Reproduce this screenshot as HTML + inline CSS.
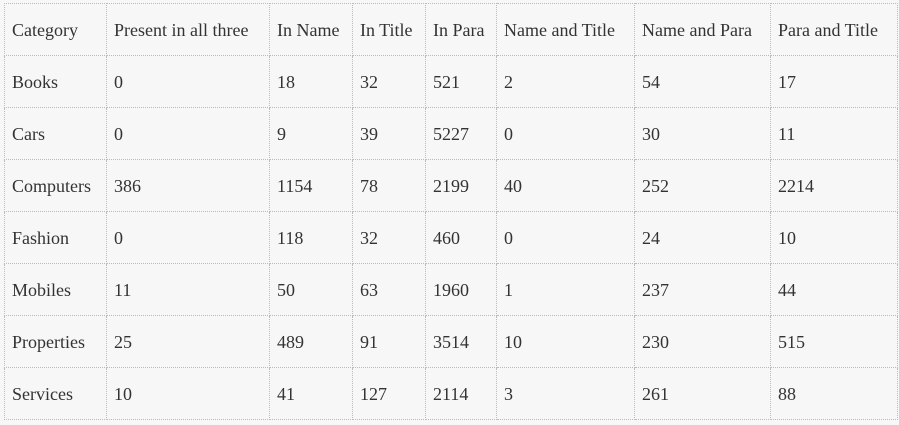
<!DOCTYPE html>
<html><head><style>
html,body{margin:0;padding:0;background:#f7f7f7;}
table{position:absolute;left:4px;top:3px;border-collapse:collapse;table-layout:fixed;width:893px;font-size:18px;color:#333;}
td{font-family:"Liberation Serif","Noto Serif CJK SC","DejaVu Serif",serif;border:1px dotted #bbb;height:52px;padding:2px 0 0 7px;box-sizing:border-box;white-space:nowrap;overflow:hidden;vertical-align:middle;}
</style></head><body>
<table>
<colgroup><col style="width:102px"><col style="width:163px"><col style="width:83px"><col style="width:73px"><col style="width:71px"><col style="width:138px"><col style="width:136px"><col style="width:127px"></colgroup>
<tr><td>Category</td><td>Present in all three</td><td>In Name</td><td>In Title</td><td>In Para</td><td>Name and Title</td><td>Name and Para</td><td>Para and Title</td></tr>
<tr><td>Books</td><td>0</td><td>18</td><td>32</td><td>521</td><td>2</td><td>54</td><td>17</td></tr>
<tr><td>Cars</td><td>0</td><td>9</td><td>39</td><td>5227</td><td>0</td><td>30</td><td>11</td></tr>
<tr><td>Computers</td><td>386</td><td>1154</td><td>78</td><td>2199</td><td>40</td><td>252</td><td>2214</td></tr>
<tr><td>Fashion</td><td>0</td><td>118</td><td>32</td><td>460</td><td>0</td><td>24</td><td>10</td></tr>
<tr><td>Mobiles</td><td>11</td><td>50</td><td>63</td><td>1960</td><td>1</td><td>237</td><td>44</td></tr>
<tr><td>Properties</td><td>25</td><td>489</td><td>91</td><td>3514</td><td>10</td><td>230</td><td>515</td></tr>
<tr><td>Services</td><td>10</td><td>41</td><td>127</td><td>2114</td><td>3</td><td>261</td><td>88</td></tr>
</table>
</body></html>
